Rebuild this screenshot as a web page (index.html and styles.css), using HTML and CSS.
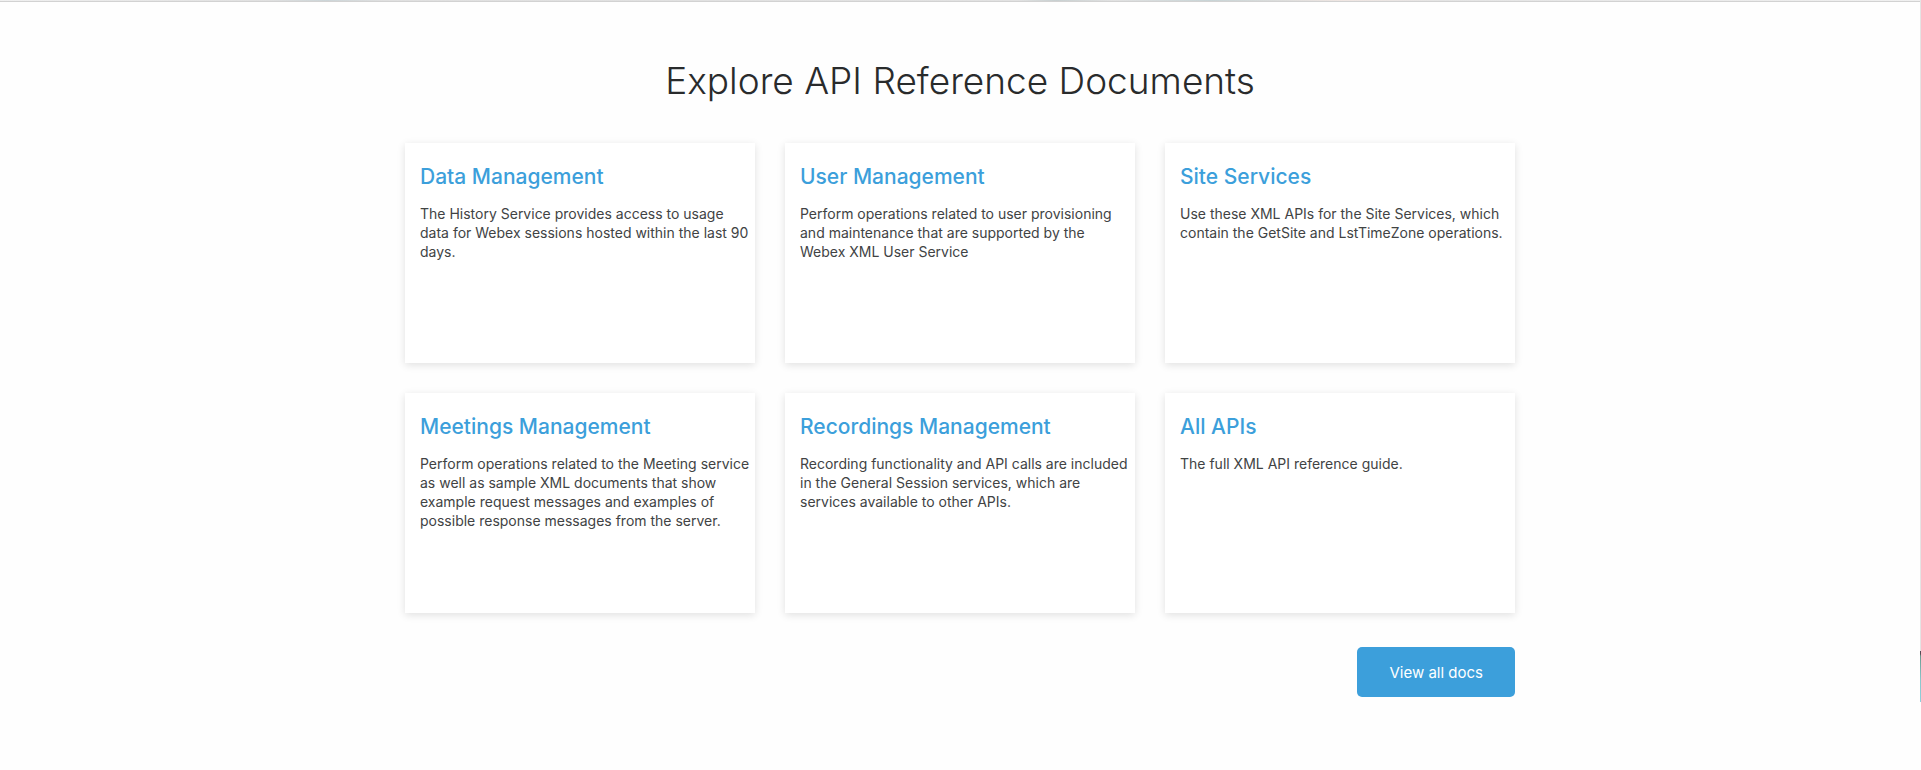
FILE: index.html
```html
<!DOCTYPE html>
<html lang="en">
<head>
    <meta charset="UTF-8">
    <meta name="viewport" content="width=device-width, initial-scale=1.0">
    <title>API Reference Documents</title>
    <link rel="stylesheet" href="styles.css">
</head>
<body>
    <div class="page">
        <main class="content">
            <div class="banner-edge"></div>
            <section class="docs">
                <h1 class="docs-heading">Explore API Reference Documents</h1>

                <div class="cards">
                    <article class="card">
                        <h2 class="card-title"><a href="#data">Data Management</a></h2>
                        <p class="card-text">The History Service provides access to usage data for Webex sessions hosted within the last 90 days.</p>
                    </article>
                    <article class="card">
                        <h2 class="card-title"><a href="#user">User Management</a></h2>
                        <p class="card-text">Perform operations related to user provisioning and maintenance that are supported by the Webex XML User Service</p>
                    </article>
                    <article class="card">
                        <h2 class="card-title"><a href="#site">Site Services</a></h2>
                        <p class="card-text">Use these XML APIs for the Site Services, which contain the GetSite and LstTimeZone operations.</p>
                    </article>
                    <article class="card">
                        <h2 class="card-title"><a href="#meetings">Meetings Management</a></h2>
                        <p class="card-text">Perform operations related to the Meeting service as well as sample XML documents that show example request messages and examples of possible response messages from the server.</p>
                    </article>
                    <article class="card">
                        <h2 class="card-title"><a href="#recordings">Recordings Management</a></h2>
                        <p class="card-text">Recording functionality and API calls are included in the General Session services, which are services available to other APIs.</p>
                    </article>
                    <article class="card">
                        <h2 class="card-title"><a href="#all">All APIs</a></h2>
                        <p class="card-text">The full XML API reference guide.</p>
                    </article>
                </div>

                <div class="docs-footer">
                    <button class="btn" type="button">View all docs</button>
                </div>
            </section>
        </main>
        <div class="side-edge"></div>
    </div>
</body>
</html>
```
FILE: styles.css
```css
* { box-sizing: border-box; }
body {
    margin: 0;
    background-color: #fefefe;
    color: #414344;
    font-family: Inter, "Liberation Sans", sans-serif;
}
.page { display: flex; min-height: 100vh; }
.content { flex: 1; }
.banner-edge {
    height: 2px;
    border-bottom: 1px solid #d2d2d2;
    background: linear-gradient(to right, #f0f0f0 0%, #e0e0e0 14%, #ccd5d8 17%, #e0e0e0 20%, #e2e2e2 53%, #c8d0d1 55%, #e2e2e2 58%, #c8d4d6 63%, #f0e6e2 70%, #e4e4e4 75%, #f0f0f0 100%);
}
.docs {
    max-width: 1110px;
    margin: 0 auto;
    padding: 53px 0 40px;
}
.docs-heading {
    margin: 0 0 36px;
    color: #292b2c;
    font-size: 37px;
    font-weight: 300;
    line-height: 52px;
    text-align: center;
}
.cards {
    display: grid;
    grid-template-columns: repeat(3, 1fr);
    gap: 30px;
}
.card {
    min-height: 220px;
    padding: 20px 2px 20px 15px;
    background-color: #fff;
    box-shadow: 0 2px 8px rgba(0, 0, 0, 0.12);
}
.card-title {
    margin: 0 0 13px;
    font-size: 21px;
    font-weight: 500;
    line-height: 28px;
}
.card-title a { color: #3c9fdb; text-decoration: none; }
.card-text { margin: 0; font-size: 14px; line-height: 19px; }
.docs-footer {
    display: flex;
    justify-content: flex-end;
    margin-top: 34px;
}
.btn {
    cursor: pointer;
    height: 50px;
    padding: 0 32px;
    border: none;
    border-radius: 5px;
    background-color: #3c9fdb;
    color: #fff;
    font-family: inherit;
    font-size: 15px;
}
/* sliver of the panel that sits past the right edge */
.side-edge {
    width: 1px;
    background: linear-gradient(to bottom, #e4e4e4 651px, #554a55 651px, #554a55 654px, #6b9b90 656px, #8cc8cc 680px, #8ed0dc 702px, transparent 702px);
}
```
